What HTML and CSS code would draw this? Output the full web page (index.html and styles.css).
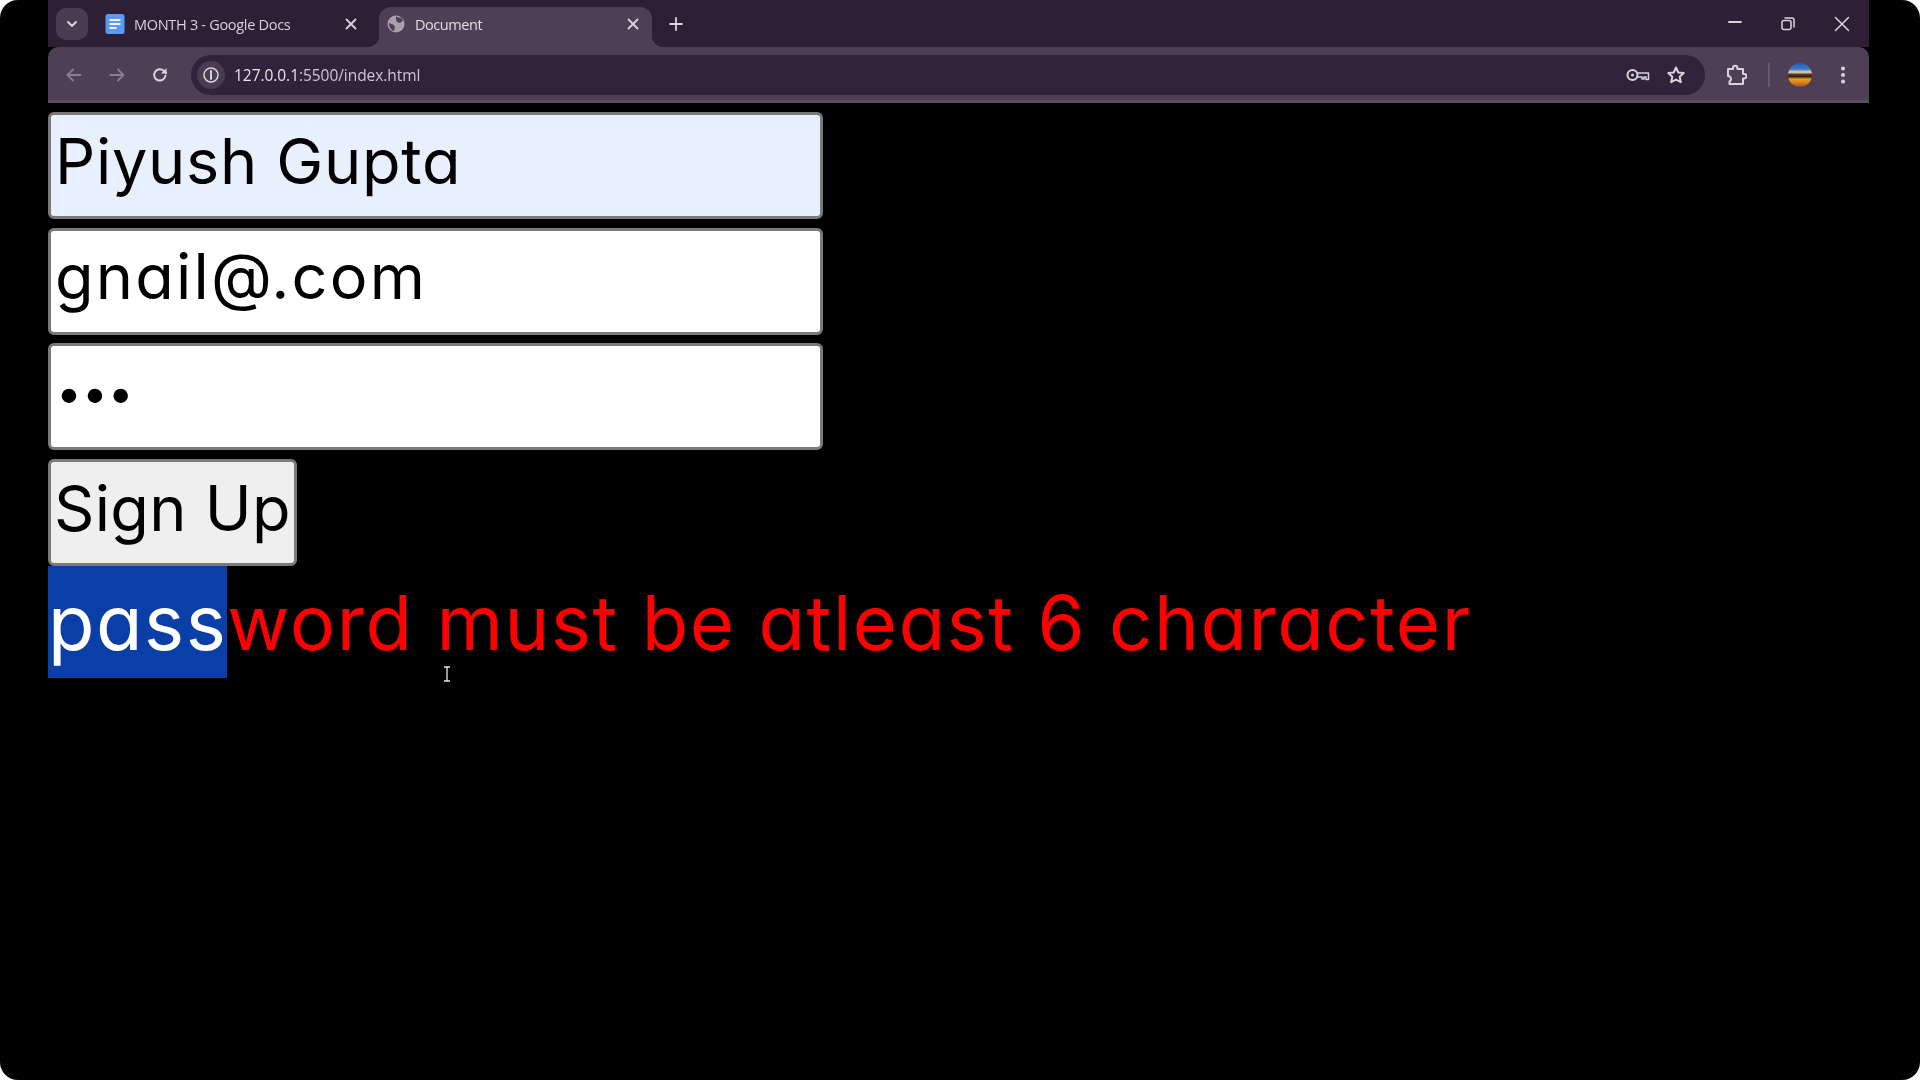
FILE: index.html
```html
<!DOCTYPE html>
<html lang="en">
<head>
<meta charset="utf-8">
<title>Document</title>
<link rel="stylesheet" href="styles.css">
</head>
<body>
<div class="stage">
  <div class="window">
    <div class="tabstrip">
      <button class="tab-menu" aria-label="Tab search">
        <svg width="16" height="16" viewBox="0 0 16 16"><path d="M4 6l4 4 4-4" class="ico thick"/></svg>
      </button>
      <div class="tab">
        <svg class="favicon" width="20" height="20" viewBox="0 0 20 20"><rect x="0.5" y="0" width="19" height="20" rx="2.5" fill="#5a9af5"/><path d="M4.5 6h11M4.5 10h11M4.5 14h7" stroke="#eef4fe" stroke-width="2" fill="none"/></svg>
        <span class="tab-title">MONTH 3 - Google Docs</span>
        <svg class="tab-close" width="14" height="14" viewBox="0 0 14 14"><path d="M2.5 2.5l9 9M11.5 2.5l-9 9" class="ico"/></svg>
      </div>
      <div class="tab active">
        <svg class="favicon" width="18" height="18" viewBox="0 0 18 18"><circle cx="9" cy="9" r="8.5" fill="#a89fad"/><path d="M9 1.5c2 1 3.5 1.5 5 1l2 3-3 2.5-3-1-1-2.5zM2 8l4 1.500 2 2.500-1 4C4 15 2 12 2 8z" fill="#4f3f55"/></svg>
        <span class="tab-title">Document</span>
        <svg class="tab-close" width="14" height="14" viewBox="0 0 14 14"><path d="M2.500 2.500l9 9M11.500 2.500l-9 9" class="ico"/></svg>
      </div>
      <svg class="new-tab" width="16" height="16" viewBox="0 0 16 16"><path d="M8 2v12M2 8h12" class="ico"/></svg>
      <div class="window-controls">
        <svg width="14" height="16" viewBox="0 0 14 16"><path d="M1 6h12" class="ico"/></svg>
        <svg width="16" height="16" viewBox="0 0 16 16"><rect x="2" y="4.500" width="9" height="9" rx="2" class="ico thin"/><path d="M5 2h7a2 2 0 0 1 2 2v7" class="ico thin"/></svg>
        <svg width="16" height="16" viewBox="0 0 16 16"><path d="M1.500 1.500l13 13M14.500 1.500l-13 13" class="ico thin"/></svg>
      </div>
    </div>
    <div class="toolbar">
      <svg class="nav dim" width="18" height="18" viewBox="0 0 18 18"><path d="M15.500 9h-13M8 3.500L2.500 9 8 14.500" class="ico"/></svg>
      <svg class="nav dim" width="18" height="18" viewBox="0 0 18 18"><path d="M2.500 9h13M10 3.500L15.500 9 10 14.500" class="ico"/></svg>
      <svg class="nav" width="18" height="18" viewBox="0 0 18 18"><path d="M14.500 9.500A5.700 5.700 0 1 1 12.800 4.800L15 7" class="ico thick"/><path d="M15.500 2v5.500H10" fill="#d9d4dc"/></svg>
      <div class="omnibox">
        <span class="site-info">
          <svg width="18" height="18" viewBox="0 0 18 18"><circle cx="9" cy="9" r="7" class="ico thin"/><path d="M9 8v5M9 5v1.800" class="ico thick"/></svg>
        </span>
        <span class="url">127.0.0.1<span class="url-rest">:5500/index.html</span></span>
        <svg class="omni-key" width="24" height="14" viewBox="0 0 24 14"><circle cx="6.500" cy="7" r="5" class="ico thick"/><circle cx="6.500" cy="7" r="1.500" fill="#d9d4dc"/><path d="M11.500 5h11v6.500h-2.500V9h-2v2h-2V9h-4.500" class="ico thin"/></svg>
        <svg class="omni-star" width="20" height="20" viewBox="0 0 20 20"><path d="M10 2.500l2.300 5 5.400.6-4 3.700 1.100 5.400L10 14.500l-4.800 2.700 1.100-5.400-4-3.700 5.400-.6z" class="ico thick"/></svg>
      </div>
      <svg class="ext" width="22" height="22" viewBox="0 0 22 22"><path d="M3 5h5V4a2.200 2.200 0 0 1 4.400 0v1H18v5h1.200a2.200 2.200 0 0 1 0 4.400H18V20H4.500v-2.500a2.500 2.500 0 0 0 1.500-2.500c0-1.500-1.500-3-3-3z" class="ico thick"/></svg>
      <span class="sep"></span>
      <span class="avatar"></span>
      <svg class="menu" width="6" height="18" viewBox="0 0 6 18"><circle cx="3" cy="2.500" r="2" fill="#d9d4dc"/><circle cx="3" cy="9" r="2" fill="#d9d4dc"/><circle cx="3" cy="15.500" r="2" fill="#d9d4dc"/></svg>
    </div>
    <main class="page">
      <form class="signup">
        <input class="field autofilled" type="text" value="Piyush Gupta">
        <input class="field email" type="text" value="gnail@.com">
        <input class="field secret" type="password" value="abc">
        <button class="submit" type="button">Sign Up</button>
      </form>
      <p class="error"><span class="picked">pass</span>word must be atleast 6 character</p>
      <svg class="ibeam" width="8" height="16" viewBox="0 0 8 16"><path d="M1 1h6M4 1v14M1 15h6" stroke="#e8e8e8" stroke-width="1.300" fill="none"/></svg>
    </main>
  </div>
</div>
</body>
</html>
```
FILE: styles.css
```css
* { box-sizing: border-box; }
html, body { margin: 0; height: 100%; background: #fff; overflow: hidden; }
body { font-family: "Open Sans", "Noto Sans", sans-serif; }

.stage {
  width: 1920px;
  height: 1080px;
  background: #000;
  border-radius: 18px;
  padding-left: 48px;
  overflow: hidden;
}
.window { width: 1821px; height: 1080px; display: flex; flex-direction: column; position: relative; }

.ico { fill: none; stroke: #d9d4dc; stroke-width: 1.8; stroke-linecap: round; stroke-linejoin: round; }
.ico.thick { stroke-width: 2; }
.ico.thin { stroke-width: 1.500; }

.tabstrip {
  height: 47px;
  flex: none;
  background: #2e1f35;
  display: flex;
  align-items: flex-start;
  padding-left: 8px;
  filter: blur(0.35px);
}
.tab-menu {
  width: 32px;
  height: 32px;
  margin-top: 8px;
  border: 0;
  padding: 0;
  border-radius: 10px;
  background: #4a3c50;
  display: flex;
  align-items: center;
  justify-content: center;
  flex: none;
}
.tab {
  width: 273px;
  height: 40px;
  margin-top: 7px;
  flex: none;
  display: flex;
  align-items: center;
  padding: 0 12px 6px 17px;
  color: #d8d3da;
  font-size: 14.500px;
  position: relative;
  border-radius: 12px 12px 0 0;
}
.tab:nth-of-type(1) { padding-right: 21px; width: 291px; }
.tab.active {
  background: #4f3f55;
  color: #e0dce2;
  width: 273px;
  padding-left: 8px;
  padding-right: 12px;
}
.tab.active::before,
.tab.active::after {
  content: "";
  position: absolute;
  bottom: 0;
  width: 12px;
  height: 12px;
}
.tab.active::before { left: -12px; background: radial-gradient(circle at 0 0, transparent 12px, #4f3f55 12.500px); }
.tab.active::after { right: -12px; background: radial-gradient(circle at 100% 0, transparent 12px, #4f3f55 12.500px); }
.tab .favicon { flex: none; }
.tab-title { margin-left: 9px; flex: 1; white-space: nowrap; letter-spacing: -0.3px; }
.tab.active .tab-title { margin-left: 10px; letter-spacing: -0.45px; }
.tab-close { flex: none; }
.new-tab { margin: 16px 0 0 16px; flex: none; }
.window-controls {
  margin-left: auto;
  margin-top: 16px;
  display: flex;
  gap: 38px;
  padding-right: 19px;
}

.toolbar {
  height: 56px;
  flex: none;
  background: #4f3f55;
  border-bottom: 3px solid #5a4d60;
  border-radius: 10px 10px 0 0;
  display: flex;
  align-items: center;
  padding: 3px 17px 0 17px;
  filter: blur(0.35px);
}
.nav { flex: none; margin-right: 25px; }
.nav.dim { opacity: 0.42; }
.nav:nth-of-type(3) { margin-right: 22px; }
.omnibox {
  flex: none;
  width: 1514px;
  height: 40px;
  background: #32223a;
  border-radius: 20px;
  display: flex;
  align-items: center;
  padding-left: 6px;
  padding-right: 19px;
}
.site-info {
  width: 28px;
  height: 28px;
  border-radius: 50%;
  background: #4a3c50;
  display: flex;
  align-items: center;
  justify-content: center;
  flex: none;
}
.url { margin-left: 9px; color: #e8e4ea; font-size: 15.500px; letter-spacing: -0.05px; flex: 1; }
.url-rest { color: #cdc7d1; }
.omni-key { flex: none; margin-right: 16px; }
.omni-star { flex: none; }
.ext { flex: none; margin-left: 20px; }
.sep { width: 2px; height: 24px; background: #66596c; margin-left: 21px; flex: none; }
.avatar {
  width: 24px;
  height: 24px;
  border-radius: 50%;
  margin-left: 18px;
  flex: none;
  background: linear-gradient(#1f5fb5 0%, #3f7cc8 26%, #e8d9b0 38%, #5a3a20 48%, #2a1f1a 56%, #f0a020 68%, #d07a18 84%, #7a5028 100%);
}
.menu { flex: none; margin-left: 28px; }

.page { flex: 1; background: #000; padding-top: 9px; position: relative; filter: blur(0.35px); }
.signup { display: flex; flex-direction: column; align-items: flex-start; gap: 8.5px; }
.field, .submit {
  font-family: Inter, "Noto Sans", sans-serif;
  font-feature-settings: "cv11" 1;
  font-size: 63px;
  color: #000;
  border: 3px solid #7a7a7a;
  border-radius: 6px;
  height: 107px;
  letter-spacing: 0.7px;
}
.field {
  width: 775px;
  padding: 0 4px 10px;
  background: #fff;
  outline: 0;
}
.field.autofilled { background: #e8f0fe; }
.field.email { letter-spacing: 2.2px; }
.field.secret { font-size: 46px; letter-spacing: 0; padding: 0 5px 10px; }
.submit { width: 249px; padding: 0 0 9px; background: #efefef; letter-spacing: 0.3px; }

.error {
  margin: 0;
  font-family: Inter, "Noto Sans", sans-serif;
  font-feature-settings: "cv11" 1;
  font-size: 76px;
  line-height: 112px;
  height: 112px;
  letter-spacing: 1.5px;
  color: #f00;
  white-space: nowrap;
}
.picked { display: inline-block; background: #0a3fa8; color: #fff; }
.ibeam { position: absolute; left: 395px; top: 563px; }
```
